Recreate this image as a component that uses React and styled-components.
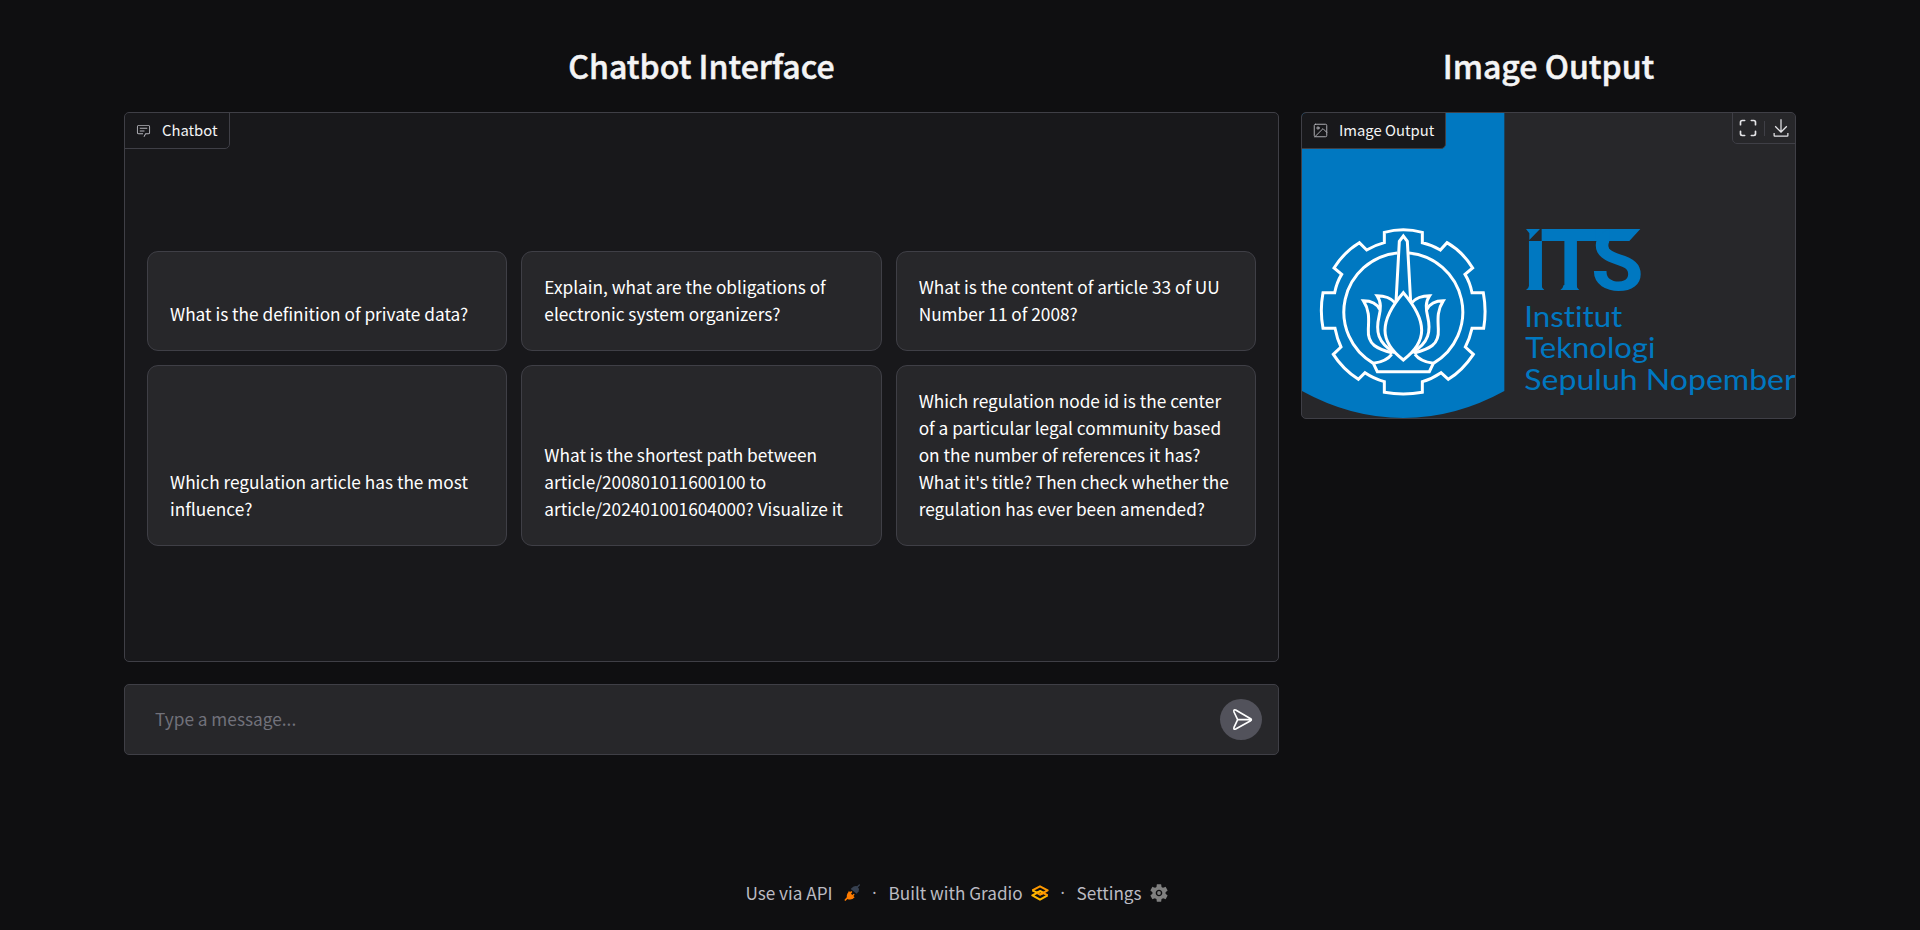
import React from "react";
import styled, { createGlobalStyle } from "styled-components";
import { MdSettings } from "react-icons/md";

const Global = createGlobalStyle`
  * { box-sizing: border-box; }
  body {
    margin: 0;
    background: #0f0f11;
    color: #f4f4f5;
    font-family: "Noto Sans CJK SC", "Noto Sans", sans-serif;
    overflow: hidden;
  }
`;

const Page = styled.div`
  height: 930px;
  width: 1672px;
  margin: 0 auto;
  padding-top: 40px;
  display: flex;
  flex-direction: column;
`;

const Columns = styled.main`
  display: flex;
  gap: 22px;
  height: 715px;
`;

const Column = styled.section`
  width: ${(p) => p.$width}px;
  display: flex;
  flex-direction: column;
`;

const Title = styled.h1`
  margin: 0;
  height: 72px;
  padding-top: 1px;
  line-height: 48px;
  font-size: 32.1px;
  font-weight: 500;
  text-align: center;
  -webkit-text-stroke: 0.5px currentColor;
`;

const Panel = styled.div`
  position: relative;
  height: ${(p) => p.$height}px;
  background: ${(p) => p.$background};
  border: 1px solid #3f3f46;
  border-radius: 5px;
  overflow: hidden;
`;

const ChatPanel = styled(Panel)`
  padding: 138px 22px 0;
`;

const Label = styled.div`
  position: absolute;
  top: -1px;
  left: -1px;
  width: ${(p) => p.$width}px;
  height: 37px;
  padding: 0 0 1px 11px;
  display: flex;
  align-items: center;
  gap: 11px;
  background: #18181b;
  border: 1px solid #3f3f46;
  border-radius: 5px 0 5px 0;
  font-size: 14.8px;
  line-height: 20px;

  svg { width: 15px; height: 15px; color: #b4b4bb; flex: none; }
`;

const Examples = styled.div`
  display: grid;
  grid-template-columns: repeat(3, 1fr);
  grid-template-rows: 100px 181px;
  gap: 14px;
`;

const Example = styled.button`
  display: flex;
  align-items: flex-end;
  padding: 21px 22px 23px;
  background: #27272a;
  border: 1px solid #3f3f46;
  border-radius: 11px;
  color: #fff;
  font: inherit;
  font-size: 17.25px;
  line-height: 27px;
  text-align: left;
  white-space: pre;
`;

const Composer = styled.div`
  height: 71px;
  margin-top: 22px;
  padding: 0 16px 0 30px;
  display: flex;
  align-items: center;
  background: #27272a;
  border: 1px solid #3f3f46;
  border-radius: 5px;
`;

const MessageInput = styled.input`
  flex: 1;
  padding: 0 0 2px;
  background: none;
  border: 0;
  outline: 0;
  color: #fff;
  font: inherit;
  font-size: 17.25px;

  &::placeholder { color: #71717a; opacity: 1; }
`;

const SendButton = styled.button`
  width: 42px;
  height: 41px;
  padding: 0;
  border: 0;
  border-radius: 50%;
  background: #52525b;
  color: #fff;
  svg { display: block; }
`;

const Tools = styled.div`
  position: absolute;
  top: -1px;
  right: -1px;
  width: 64px;
  height: 32px;
  padding: 0 4px 0 5px;
  display: flex;
  align-items: center;
  justify-content: space-between;
  background: #27272a;
  border: 1px solid #3f3f46;
  border-radius: 0 5px 0 5px;
  color: #e4e4e7;
`;

const Separator = styled.i`
  width: 1px;
  height: 15px;
  background: #3f3f46;
`;

const Picture = styled.svg`
  display: block;
  width: 493px;
  height: 305px;
`;

const Footer = styled.footer`
  margin-top: 124px;
  padding-right: 5px;
  display: flex;
  justify-content: center;
  align-items: center;
  height: 28px;
  color: #bbbbc2;
  font-size: 17.15px;
  line-height: 28px;
`;

const FooterLink = styled.span`
  display: flex;
  align-items: center;
  gap: ${(p) => p.$gap}px;
`;

const Dot = styled.span`
  width: 28px;
  text-align: center;
  font-family: "Noto Sans", sans-serif;
  font-size: 16px;
`;

const ChatIcon = () => (
  <svg viewBox="0 0 32 32" fill="currentColor">
    <path d="M17.74 30L16 29l4-7h6a2 2 0 0 0 2-2V8a2 2 0 0 0-2-2H6a2 2 0 0 0-2 2v12a2 2 0 0 0 2 2h9v2H6a4 4 0 0 1-4-4V8a4 4 0 0 1 4-4h20a4 4 0 0 1 4 4v12a4 4 0 0 1-4 4h-4.84Z" />
    <path d="M8 10h16v2H8zm0 6h10v2H8z" />
  </svg>
);

const ImageIcon = () => (
  <svg viewBox="0 0 24 24" fill="none" stroke="currentColor" strokeWidth="1.5" strokeLinecap="round" strokeLinejoin="round">
    <rect x="2" y="2" width="20" height="20" rx="2" />
    <circle cx="8" cy="8" r="1.8" />
    <path d="M22 15l-6-6L3 22" />
  </svg>
);

const ExpandIcon = () => (
  <svg width="20" height="20" viewBox="0 0 24 24" fill="none" stroke="currentColor" strokeWidth="2" strokeLinecap="round" strokeLinejoin="round">
    <path d="M8 3H5a2 2 0 0 0-2 2v3m18 0V5a2 2 0 0 0-2-2h-3m0 18h3a2 2 0 0 0 2-2v-3M3 16v3a2 2 0 0 0 2 2h3" />
  </svg>
);

const DownloadIcon = () => (
  <svg width="20" height="20" viewBox="0 0 32 32" fill="currentColor">
    <path d="M26 24v4H6v-4H4v4a2 2 0 0 0 2 2h20a2 2 0 0 0 2-2v-4zm0-10l-1.41-1.41L17 20.17V2h-2v18.17l-7.59-7.58L6 14l10 10l10-10z" />
  </svg>
);

const SendIcon = () => (
  <svg width="42" height="41" viewBox="0 0 126 123" fill="none" stroke="currentColor" strokeWidth="5" strokeLinejoin="round">
    <path d="M47 33 92 59Q96 62 92 65L47 90Q40 93 42 85L53 62 42 39Q40 30 47 33ZM53 62H94" />
  </svg>
);

const PlugIcon = () => (
  <svg width="17" height="18" viewBox="0 0 51 54">
    <g transform="translate(-341 -74)">
      <path d="M387 77l-7 7" stroke="#374151" strokeWidth="4" strokeLinecap="round" />
      <path d="M364 86q8-8 17-5q7 7 4 15l-6 7-18-14z" fill="#374151" />
      <path d="M345 122l7-7" stroke="#ff7c00" strokeWidth="5" strokeLinecap="round" />
      <path d="M355 94l4 4 4-3 3 3-4 5 4 4 4-4 3 3-4 4 4 4q-9 10-22 5q-5-12 4-22z" fill="#ff7c00" />
    </g>
  </svg>
);

const GradioIcon = () => (
  <svg width="18" height="16" viewBox="0 0 54 48" fill="none" strokeWidth="6" strokeLinejoin="round">
    <path d="M4 16 27 4 50 16 27 29" stroke="#f90" />
    <path d="M4 16 18 23 27 18 38 24" stroke="#ffb800" />
    <path d="M50 31 27 44 4 31 27 19" stroke="#ffb800" />
    <path d="M50 31 37 24 27 29 18 24" stroke="#f90" />
  </svg>
);

const GearIcon = () => (
  <svg width="22" height="22" viewBox="0 0 22 22">
    <MdSettings size={22} color="#808080" />
    <circle cx="11" cy="11" r="1.9" fill="#808080" />
  </svg>
);

const toothPath =
  "M283 428V397Q340 382 397 397V428Q425 434 451 450L471 428Q519 456 548 504L525 523Q540 547 546 578H580Q590 632 581 685H546Q539 716 526 741L550 763Q518 811 475 838L453 818Q425 837 397 845V877Q340 887 283 877V845Q250 835 225 818L205 838Q158 807 130 763L153 741Q141 716 135 685H99Q89 632 99 578H134Q140 547 155 523L132 504Q162 456 208 428L230 450Q256 435 283 428Z";

const SidePetals = () => (
  <g>
    <path d="M315 608C303 594 281 587 261 587C275 607 272 628 267 650C257 692 262 729 314 758" />
    <path d="M269 628C260 609 240 602 220 602C240 633 236 660 235 688C232 735 262 747 308 759" />
    <path d="M250 790Q290 784 305 763" />
  </g>
);

const InstituteLogo = () => (
  <Picture viewBox="36 39 1479 915">
    <path d="M36 39H643V873Q496 954 340 954Q183 954 36 873Z" fill="#0078c1" />
    <g fill="none" stroke="#fff" strokeWidth="9">
      <path d={toothPath} />
      <path d="M322 459A178 178 0 0 0 250 790L262 815H418L430 790A178 178 0 0 0 357 459" />
      <path d="M318 606 328 424 340 408 352 424 362 606" />
      <path d="M340 578C302 622 285 658 285 691C285 725 306 754 340 780C374 754 395 725 395 691C395 658 378 622 340 578Z" />
      <SidePetals />
      <g transform="translate(680 0) scale(-1 1)">
        <SidePetals />
      </g>
    </g>
    <g fill="#0078c1">
      <clipPath id="wordmark">
        <path d="M700 423H765V387H958V446H1070V580H700Z" />
      </clipPath>
      <path d="M708 387H750L718 420V400ZM755 387H1051L1018 423H755Z" />
      <path d="M708 570Q717 563 718 555H754Q755 563 763 570ZM811 570Q820 563 821 555H859Q860 563 868 570Z" />
      <text y="569" fontFamily="Roboto, sans-serif" fontWeight="700" fontSize="257" clipPath="url(#wordmark)">
        <tspan x="700" fontSize="276">i</tspan>
        <tspan x="763">T</tspan>
        <tspan x="903">S</tspan>
      </text>
      <g fontFamily="Lato, sans-serif" fontSize="88" fontVariant="no-common-ligatures">
        <text x="703" y="680" textLength="294" lengthAdjust="spacingAndGlyphs">Institut</text>
        <text x="706" y="775" textLength="390" lengthAdjust="spacingAndGlyphs">Teknologi</text>
        <text x="703" y="871" textLength="814" lengthAdjust="spacingAndGlyphs">Sepuluh Nopember</text>
      </g>
    </g>
  </Picture>
);

const examples = [
  "What is the definition of private data?",
  "Explain, what are the obligations of\nelectronic system organizers?",
  "What is the content of article 33 of UU\nNumber 11 of 2008?",
  "Which regulation article has the most\ninfluence?",
  "What is the shortest path between\narticle/200801011600100 to\narticle/202401001604000? Visualize it",
  "Which regulation node id is the center\nof a particular legal community based\non the number of references it has?\nWhat it's title? Then check whether the\nregulation has ever been amended?",
];

export default function App() {
  return (
    <Page>
      <Global />
      <Columns>
        <Column $width={1155}>
          <Title>Chatbot Interface</Title>
          <ChatPanel $height={550} $background="#18181b">
            <Label $width={106}><ChatIcon />Chatbot</Label>
            <Examples>
              {examples.map((text) => <Example key={text}>{text}</Example>)}
            </Examples>
          </ChatPanel>
          <Composer>
            <MessageInput placeholder="Type a message..." />
            <SendButton aria-label="Send"><SendIcon /></SendButton>
          </Composer>
        </Column>
        <Column $width={495}>
          <Title>Image Output</Title>
          <Panel $height={307} $background="#27272a">
            <InstituteLogo />
            <Label $width={145}><ImageIcon />Image Output</Label>
            <Tools><ExpandIcon /><Separator /><DownloadIcon /></Tools>
          </Panel>
        </Column>
      </Columns>
      <Footer>
        <FooterLink $gap={11}>Use via API<PlugIcon /></FooterLink>
        <Dot>·</Dot>
        <FooterLink $gap={8}>Built with Gradio<GradioIcon /></FooterLink>
        <Dot>·</Dot>
        <FooterLink $gap={6}>Settings<GearIcon /></FooterLink>
      </Footer>
    </Page>
  );
}
